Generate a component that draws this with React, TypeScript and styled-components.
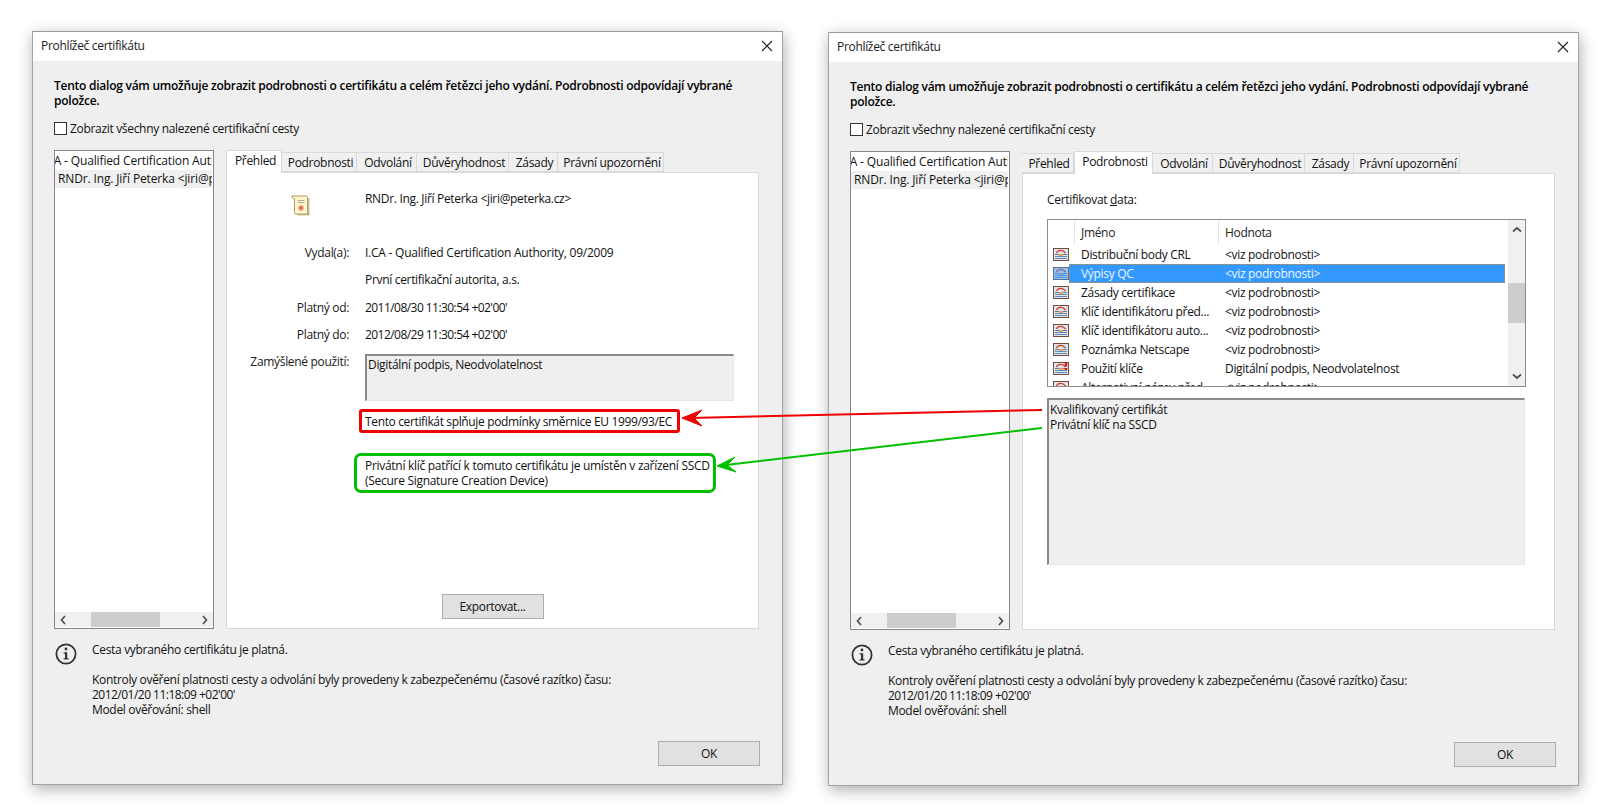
import React from "react";
import styled, { createGlobalStyle } from "styled-components";

const Global = createGlobalStyle`
  html, body { margin: 0; padding: 0; background: #fff; overflow: hidden; }
  body { font-family: "Open Sans", "Liberation Sans", sans-serif; font-size: 12px; line-height: 15px; color: #111; }
`;

const Page = styled.div`
  position: relative;
  width: 1616px;
  height: 812px;
  box-sizing: border-box;
  padding: 31px 0 0 32px;
  display: flex;
  align-items: flex-start;
  gap: 45px;
  letter-spacing: -0.32px;
`;

const Tuned = styled.span<{ $ls: number }>`
  letter-spacing: ${(p) => p.$ls}px;
`;

const Dialog = styled.section<{ $lower?: boolean }>`
  width: 751px;
  box-sizing: border-box;
  margin-top: ${(p) => (p.$lower ? "1px" : "0")};
  border: 1px solid #a3a3a3;
  border-top-color: #9a9a9a;
  background: #efefef;
  box-shadow: 1px 4px 14px rgba(0, 0, 0, 0.32);
`;

const TitleBar = styled.header`
  height: 29px;
  box-sizing: border-box;
  padding: 0 6px 2px 8px;
  background: #fff;
  display: flex;
  align-items: center;
  justify-content: space-between;
`;

const TitleText = styled.span`
  color: #1a1a1a;
`;

const CloseBtn = styled.span`
  width: 16px;
  height: 16px;
  display: flex;
  align-items: center;
  justify-content: center;
  margin-right: 1px;
`;

const Body = styled.div`
  padding: 17px 22px 18px 21px;
`;

const Intro = styled.p`
  margin: 0;
  font-weight: 600;
  color: #000;
  letter-spacing: -0.25px;
`;

const CheckRow = styled.label`
  display: flex;
  align-items: center;
  gap: 3px;
  height: 14px;
  margin-top: 13px;
`;

const CheckBox = styled.span`
  width: 11px;
  height: 11px;
  border: 1px solid #333;
  background: #fff;
`;

const Main = styled.div`
  display: flex;
  gap: 12px;
  margin-top: 15px;
`;

const TreeBox = styled.div`
  width: 160px;
  height: 479px;
  box-sizing: border-box;
  border: 1px solid #82878f;
  background: #fff;
  display: flex;
  flex-direction: column;
`;

const TreeItems = styled.div`
  flex: 1;
  padding-top: 1px;
  overflow: hidden;
`;

const TreeRow = styled.div<{ $current?: boolean; $indent: number }>`
  height: 18px;
  line-height: 18px;
  margin-right: 1px;
  white-space: nowrap;
  overflow: hidden;
  text-indent: ${(p) => p.$indent}px;
  letter-spacing: -0.14px;
  background: ${(p) => (p.$current ? "#f0f0f0" : "transparent")};
`;

const HScroll = styled.div`
  height: 15px;
  margin-bottom: 1px;
  background: #f0f0f0;
  display: flex;
  align-items: center;
`;

const ScrollArrow = styled.span`
  width: 17px;
  height: 15px;
  flex: none;
  display: flex;
  align-items: center;
  justify-content: center;
`;

const HThumbGap = styled.span`
  width: 19px;
  flex: none;
`;

const HThumb = styled.span`
  width: 69px;
  height: 15px;
  background: #cdcdcd;
  flex: none;
`;

const Spacer = styled.span`
  flex: 1;
`;

const TabArea = styled.div`
  width: 533px;
  display: flex;
  flex-direction: column;
`;

const Tabs = styled.div`
  height: 22px;
  display: flex;
  align-items: flex-end;
  letter-spacing: -0.3px;
`;

const Tab = styled.div<{ $active?: boolean; $w: number }>`
  width: ${(p) => p.$w}px;
  box-sizing: border-box;
  height: ${(p) => (p.$active ? 23 : 20)}px;
  margin-bottom: ${(p) => (p.$active ? -1 : 0)}px;
  padding: 0 0 ${(p) => (p.$active ? 3 : 0)}px 3px;
  position: relative;
  z-index: ${(p) => (p.$active ? 1 : 0)};
  display: flex;
  align-items: center;
  justify-content: center;
  white-space: nowrap;
  background: ${(p) => (p.$active ? "#fff" : "#f0f0f0")};
  border: 1px solid #d9d9d9;
  border-left-width: ${(p) => (p.$active ? 1 : 0)}px;
  border-bottom-width: ${(p) => (p.$active ? 0 : 1)}px;
`;

const Panel = styled.div`
  height: 457px;
  box-sizing: border-box;
  border: 1px solid #d9d9d9;
  background: #fff;
  display: flex;
  flex-direction: column;
`;

const Overview = styled(Panel)`
  padding: 12px 0 9px;
`;

const Details = styled(Panel)`
  padding: 18px 28px 0 24px;
`;

const InfoRow = styled.div<{ $gap?: number }>`
  display: flex;
  min-height: 27px;
  line-height: 27px;
  margin-top: ${(p) => p.$gap ?? 0}px;
`;

const LabelCol = styled.div`
  width: 122px;
  text-align: right;
  flex: none;
  color: #1a1a1a;
`;

const IconCol = styled.div`
  width: 122px;
  height: 27px;
  box-sizing: border-box;
  padding: 10px 0 0 64px;
  flex: none;
`;

const ValueCol = styled.div`
  margin-left: 16px;
  color: #111;
`;

const FieldSlot = styled.div`
  padding-top: 6px;
`;

const ReadOnlyField = styled.div<{ $w: number; $h: number; $top?: number; $pad?: number }>`
  width: ${(p) => p.$w}px;
  height: ${(p) => p.$h}px;
  margin-top: ${(p) => p.$top ?? 0}px;
  box-sizing: border-box;
  background: #efefef;
  border-top: 2px solid #8a8a8a;
  border-left: 2px solid #8a8a8a;
  border-right: 1px solid #e6e6e6;
  border-bottom: 1px solid #e6e6e6;
  padding: ${(p) => p.$pad ?? 2}px 1px;
  line-height: 15px;
`;

const Notices = styled.div`
  margin-left: 126px;
  display: flex;
  flex-direction: column;
`;

const RedNotice = styled.div`
  align-self: flex-start;
  margin: 8px 0 0 6px;
  border: 3px solid #f00000;
  border-radius: 3px;
  padding: 2px 5px 1px 3px;
  white-space: nowrap;
  letter-spacing: -0.36px;
`;

const GreenNotice = styled.div`
  align-self: flex-start;
  margin: 20px 0 0 1px;
  border: 3px solid #00c000;
  border-radius: 7px;
  padding: 2px 3px 2px 8px;
  white-space: nowrap;
  letter-spacing: -0.29px;
`;

const PushBtn = styled.button<{ $w: number }>`
  width: ${(p) => p.$w}px;
  height: 25px;
  box-sizing: border-box;
  border: 1px solid #adadad;
  background: #e1e1e1;
  font: inherit;
  letter-spacing: inherit;
  color: #111;
  padding: 0;
`;

const ExportRow = styled.div`
  margin-top: auto;
  display: flex;
  justify-content: center;
`;

const Underlined = styled.span`
  text-decoration: underline;
`;

const FieldList = styled.div`
  margin-top: 12px;
  width: 479px;
  height: 168px;
  box-sizing: border-box;
  border: 1px solid #8c8c8c;
  display: flex;
  gap: 3px;
`;

const ListMain = styled.div`
  width: 457px;
  overflow: hidden;
`;

const ColHead = styled.div`
  height: 24px;
  margin-top: 1px;
  display: grid;
  grid-template-columns: 26px 144px 286px;
`;

const HeadCell = styled.div<{ $empty?: boolean }>`
  line-height: 24px;
  padding-left: 6px;
  color: #222;
  border-left: ${(p) => (p.$empty ? "0" : "1px solid #e3e3e3")};
`;

const DataRow = styled.div`
  height: 19px;
  display: flex;
  line-height: 19px;
`;

const RowIcon = styled.div`
  width: 21px;
  flex: none;
  display: flex;
  align-items: center;
  justify-content: flex-end;
`;

const RowCells = styled.div<{ $selected?: boolean }>`
  flex: 1;
  display: grid;
  grid-template-columns: 156px 1fr;
  box-sizing: border-box;
  white-space: nowrap;
  color: ${(p) => (p.$selected ? "#eef6ff" : "#111")};
  background: ${(p) => (p.$selected ? "#3399ff" : "transparent")};
  outline: ${(p) => (p.$selected ? "1px dotted #d98a2b" : "none")};
  outline-offset: -1px;
`;

const NameCell = styled.span`
  padding-left: 12px;
`;

const VScroll = styled.div`
  width: 17px;
  background: #f0f0f0;
  display: flex;
  flex-direction: column;
`;

const VArrow = styled.span`
  height: 20px;
  flex: none;
  display: flex;
  align-items: center;
  justify-content: center;
`;

const VGap = styled.span`
  height: 43px;
  flex: none;
`;

const VThumb = styled.span`
  height: 40px;
  background: #cdcdcd;
  flex: none;
`;

const Status = styled.div`
  display: flex;
  gap: 15px;
  margin-top: 13px;
  padding-left: 1px;
`;

const StatusIcon = styled.div`
  width: 22px;
  height: 22px;
  margin-top: 1px;
  flex: none;
`;

const StatusText = styled.div`
  display: flex;
  flex-direction: column;
`;

const StatusGap = styled.p`
  margin: 0 0 15px;
`;

const StatusLine = styled.p`
  margin: 0;
`;

const Footer = styled.div`
  display: flex;
  justify-content: flex-end;
  margin-top: 24px;
`;

const Annotations = styled.svg`
  position: absolute;
  inset: 0;
  pointer-events: none;
`;

const Chevron = ({ dir }: { dir: "l" | "r" | "u" | "d" }) => {
  const d = { l: "M6 1 2.5 5 6 9", r: "M3 1 6.5 5 3 9", u: "M1 6.5 5 3 9 6.5", d: "M1 3.5 5 7 9 3.5" }[dir];
  return (
    <svg width="10" height="10" viewBox="0 0 10 10">
      <path d={d} fill="none" stroke="#505050" strokeWidth="1.7" />
    </svg>
  );
};

const CloseIcon = () => (
  <svg width="12" height="12" viewBox="0 0 12 12">
    <path d="M1 1 11 11M11 1 1 11" stroke="#222" strokeWidth="1.1" />
  </svg>
);

const ScrollIcon = () => (
  <svg width="20" height="21" viewBox="0 0 20 21">
    <path d="M5 3H18.500V20.500H6Z" fill="#8a7a48" opacity="0.45" />
    <path d="M1 1H15Q16.500 1 16.500 2.500V17.500Q16.500 19 18 19H5Q3.500 19 3.500 17.500V3.500H2.500Q1 3.500 1 1Z" fill="#fbf6d4" stroke="#b39a4a" />
    <path d="M6.500 5.500H13.500M6.500 7.500H13.500" stroke="#b3ab8c" />
    <circle cx="10" cy="13" r="3" fill="#eeb090" />
    <circle cx="10" cy="13" r="1.400" fill="#d9533a" />
  </svg>
);

const FieldIcon = ({ warn, selected }: { warn?: boolean; selected?: boolean }) => (
  <svg width="16" height="13" viewBox="0 0 16 13">
    <rect x="0.5" y="0.5" width="15" height="12" fill="#dde4ec" stroke="#7d4a38" />
    <path d="M3.500 5C5 1.600 10 1.600 12.500 5" fill="none" stroke="#d23a2a" strokeWidth="1.300" />
    <path d="M2 6.500H6M10 6.500H14" stroke="#4f7db3" />
    <path d="M6 6H10V8H6Z" fill="#f2a23c" />
    <path d="M2 8.500H14M2 10.500H14" stroke="#5f8ac0" />
    {warn && <path d="M13 0V4.500M13 6V8" stroke="#e01010" strokeWidth="2.400" />}
    {selected && <rect x="0" y="0" width="16" height="13" fill="#3399ff" opacity="0.45" />}
  </svg>
);

const InfoIcon = () => (
  <svg width="22" height="22" viewBox="0 0 22 22">
    <circle cx="11" cy="11" r="9.600" fill="none" stroke="#333" strokeWidth="1.800" />
    <circle cx="11" cy="6" r="1.400" fill="#333" />
    <path d="M8.600 9.200H12.200V15.200H13.600V16.500H8.600V15.200H10V10.500H8.600Z" fill="#333" />
  </svg>
);

const treeTop = "I.CA - Qualified Certification Authority, 09/2009";
const treeSub = "RNDr. Ing. Jiří Peterka <jiri@peterka.cz>";
const intro =
  "Tento dialog vám umožňuje zobrazit podrobnosti o certifikátu a celém řetězci jeho vydání. Podrobnosti odpovídají vybrané položce.";

const Tree = () => (
  <TreeBox>
    <TreeItems>
      <TreeRow $indent={-15}>{treeTop}</TreeRow>
      <TreeRow $current $indent={3}>{treeSub}</TreeRow>
    </TreeItems>
    <HScroll>
      <ScrollArrow><Chevron dir="l" /></ScrollArrow>
      <HThumbGap />
      <HThumb />
      <Spacer />
      <ScrollArrow><Chevron dir="r" /></ScrollArrow>
    </HScroll>
  </TreeBox>
);

const tabDefs = ["Přehled", "Podrobnosti", "Odvolání", "Důvěryhodnost", "Zásady", "Právní upozornění"];

const TabStrip = ({ active, widths }: { active: number; widths: number[] }) => (
  <Tabs>
    {tabDefs.map((t, i) => (
      <Tab key={t} $active={i === active} $w={widths[i]}>{t}</Tab>
    ))}
  </Tabs>
);

const Footnote = () => (
  <>
    <Status>
      <StatusIcon><InfoIcon /></StatusIcon>
      <StatusText>
        <StatusGap>Cesta vybraného certifikátu je platná.</StatusGap>
        <StatusLine>Kontroly ověření platnosti cesty a odvolání byly provedeny k zabezpečenému (časové razítko) času:</StatusLine>
        <StatusLine><Tuned $ls={-0.52}>2012/01/20 11:18:09 +02'00'</Tuned></StatusLine>
        <StatusLine>Model ověřování: shell</StatusLine>
      </StatusText>
    </Status>
    <Footer><PushBtn $w={102}>OK</PushBtn></Footer>
  </>
);

const Shell = ({ lower, children }: { lower?: boolean; children: React.ReactNode }) => (
  <Dialog $lower={lower}>
    <TitleBar>
      <TitleText>Prohlížeč certifikátu</TitleText>
      <CloseBtn><CloseIcon /></CloseBtn>
    </TitleBar>
    <Body>
      <Intro>{intro}</Intro>
      <CheckRow><CheckBox />Zobrazit všechny nalezené certifikační cesty</CheckRow>
      <Main>
        <Tree />
        {children}
      </Main>
      <Footnote />
    </Body>
  </Dialog>
);

const rows: { name: string; value: string; warn?: boolean; selected?: boolean }[] = [
  { name: "Distribuční body CRL", value: "<viz podrobnosti>" },
  { name: "Výpisy QC", value: "<viz podrobnosti>", selected: true },
  { name: "Zásady certifikace", value: "<viz podrobnosti>" },
  { name: "Klíč identifikátoru před...", value: "<viz podrobnosti>" },
  { name: "Klíč identifikátoru auto...", value: "<viz podrobnosti>" },
  { name: "Poznámka Netscape", value: "<viz podrobnosti>" },
  { name: "Použití klíče", value: "Digitální podpis, Neodvolatelnost", warn: true },
  { name: "Alternativní název před...", value: "<viz podrobnosti>" },
];

export default function App() {
  return (
    <Page>
      <Global />
      <Shell>
        <TabArea>
          <TabStrip active={0} widths={[56, 75, 60, 92, 49, 106]} />
          <Overview>
            <InfoRow>
              <IconCol><ScrollIcon /></IconCol>
              <ValueCol>RNDr. Ing. Jiří Peterka &lt;jiri@peterka.cz&gt;</ValueCol>
            </InfoRow>
            <InfoRow $gap={27}>
              <LabelCol>Vydal(a):</LabelCol>
              <ValueCol><Tuned $ls={-0.24}>I.CA - Qualified Certification Authority, 09/2009</Tuned></ValueCol>
            </InfoRow>
            <InfoRow>
              <LabelCol />
              <ValueCol>První certifikační autorita, a.s.</ValueCol>
            </InfoRow>
            <InfoRow $gap={1}>
              <LabelCol>Platný od:</LabelCol>
              <ValueCol><Tuned $ls={-0.55}>2011/08/30 11:30:54 +02'00'</Tuned></ValueCol>
            </InfoRow>
            <InfoRow>
              <LabelCol>Platný do:</LabelCol>
              <ValueCol><Tuned $ls={-0.55}>2012/08/29 11:30:54 +02'00'</Tuned></ValueCol>
            </InfoRow>
            <InfoRow>
              <LabelCol>Zamýšlené použití:</LabelCol>
              <ValueCol>
                <FieldSlot>
                  <ReadOnlyField $w={369} $h={47} $pad={1}>Digitální podpis, Neodvolatelnost</ReadOnlyField>
                </FieldSlot>
              </ValueCol>
            </InfoRow>
            <Notices>
              <RedNotice>Tento certifikát splňuje podmínky směrnice EU 1999/93/EC</RedNotice>
              <GreenNotice>
                Privátní klíč patřící k tomuto certifikátu je umístěn v zařízení SSCD
                <br />
                (Secure Signature Creation Device)
              </GreenNotice>
            </Notices>
            <ExportRow><PushBtn $w={102}>Exportovat...</PushBtn></ExportRow>
          </Overview>
        </TabArea>
      </Shell>
      <Shell lower>
        <TabArea>
          <TabStrip active={1} widths={[52, 79, 60, 92, 49, 106]} />
          <Details>
            <span>Certifikovat <Underlined>d</Underlined>ata:</span>
            <FieldList>
              <ListMain>
                <ColHead>
                  <HeadCell $empty />
                  <HeadCell>Jméno</HeadCell>
                  <HeadCell>Hodnota</HeadCell>
                </ColHead>
                {rows.map((r) => (
                  <DataRow key={r.name}>
                    <RowIcon><FieldIcon warn={r.warn} selected={r.selected} /></RowIcon>
                    <RowCells $selected={r.selected}>
                      <NameCell>{r.name}</NameCell>
                      <span>{r.value}</span>
                    </RowCells>
                  </DataRow>
                ))}
              </ListMain>
              <VScroll>
                <VArrow><Chevron dir="u" /></VArrow>
                <VGap />
                <VThumb />
                <Spacer />
                <VArrow><Chevron dir="d" /></VArrow>
              </VScroll>
            </FieldList>
            <ReadOnlyField $w={478} $h={167} $top={11}>
              Kvalifikovaný certifikát
              <br />
              Privátní klíč na SSCD
            </ReadOnlyField>
          </Details>
        </TabArea>
      </Shell>
      <Annotations width="1616" height="812" viewBox="0 0 1616 812">
        <path d="M1042 410 690 418" stroke="#f00000" strokeWidth="2" fill="none" />
        <path d="M682 418 702 410 694 418 702 426Z" fill="#f00000" stroke="#f00000" strokeLinejoin="round" />
        <path d="M1042 428 726 465" stroke="#00c000" strokeWidth="2" fill="none" />
        <path d="M717 466 735 457 727 465 736 472Z" fill="#00c000" stroke="#00c000" strokeLinejoin="round" />
      </Annotations>
    </Page>
  );
}
